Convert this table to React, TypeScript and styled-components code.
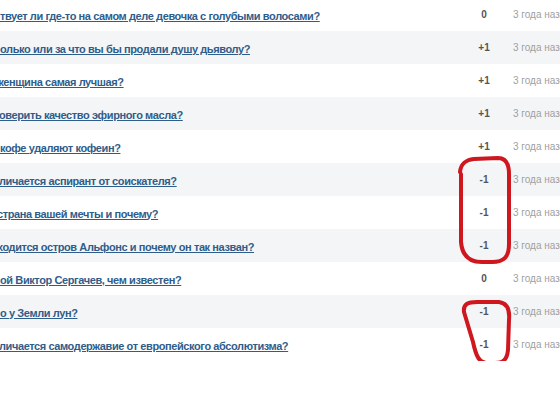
import React from 'react'
import styled, { createGlobalStyle } from 'styled-components'

const GlobalStyle = createGlobalStyle`
  html, body {
    margin: 0;
    padding: 0;
    background: #fff;
    overflow: hidden;
  }
  body {
    font-family: 'Liberation Sans', Arial, sans-serif;
  }
`

const Board = styled.div`
  position: relative;
  width: 620px;
  margin-top: -2px;
`

const Row = styled.div<{ $odd: boolean }>`
  display: grid;
  grid-template-columns: 464px 40px 1fr;
  align-items: center;
  height: 33px;
  background: ${p => (p.$odd ? '#f4f5f7' : '#ffffff')};
`

const QuestionCell = styled.div`
  overflow: hidden;
  white-space: nowrap;
`

const QuestionLink = styled.a<{ $shift: number }>`
  display: inline-block;
  margin-left: ${p => p.$shift}px;
  color: #2f5d8a;
  font-size: 11px;
  font-weight: 700;
  letter-spacing: -0.4px;
  text-decoration: underline;
  cursor: pointer;
`

const Score = styled.div`
  text-align: center;
  color: #555555;
  font-size: 10px;
  font-weight: 700;
`

const Posted = styled.div`
  padding-left: 9px;
  color: #a0a0a0;
  font-size: 10px;
  white-space: nowrap;
`

const Marks = styled.svg`
  position: absolute;
  left: 0;
  top: 2px;
  pointer-events: none;
`

const questions = [
  { text: 'твует ли где-то на самом деле девочка с голубыми волосами?', score: '0', shift: 0 },
  { text: 'олько или за что вы бы продали душу дьяволу?', score: '+1', shift: 0 },
  { text: 'женщина самая лучшая?', score: '+1', shift: -4 },
  { text: 'оверить качество эфирного масла?', score: '+1', shift: -1 },
  { text: 'кофе удаляют кофеин?', score: '+1', shift: 0 },
  { text: 'личается аспирант от соискателя?', score: '-1', shift: -1 },
  { text: 'страна вашей мечты и почему?', score: '-1', shift: -3 },
  { text: 'ходится остров Альфонс и почему он так назван?', score: '-1', shift: -3 },
  { text: 'ой Виктор Сергачев, чем известен?', score: '0', shift: 0 },
  { text: 'о у Земли лун?', score: '-1', shift: 0 },
  { text: 'личается самодержавие от европейского абсолютизма?', score: '-1', shift: -1 },
]

const App = () => {
  return (
    <>
      <GlobalStyle />
      <Board>
        {questions.map((q, i) => (
          <Row key={i} $odd={i % 2 === 1}>
            <QuestionCell>
              <QuestionLink $shift={q.shift}>{q.text}</QuestionLink>
            </QuestionCell>
            <Score>{q.score}</Score>
            <Posted>3 года назад</Posted>
          </Row>
        ))}
        {/* hand-drawn red marks over the -1 scores */}
        <Marks width="560" height="395" viewBox="0 0 560 395">
          <g fill="none" stroke="#cf1720" strokeWidth="4" strokeLinecap="round" strokeLinejoin="round">
            <path d="M460,172 C461,163 466,160 474,159 L498,158 C506,158 509,164 509,174 L509,244 C509,257 504,262 492,262 L482,262 C469,262 462,255 461,242 L461,174" />
            <path d="M464,312 C463,304 468,302 477,302 L499,302 C507,303 510,309 509,320 L508,350 C507,360 503,363 495,363 L486,363 C479,362 476,356 473,342 L464,312" />
          </g>
        </Marks>
      </Board>
    </>
  )
}

export default App
